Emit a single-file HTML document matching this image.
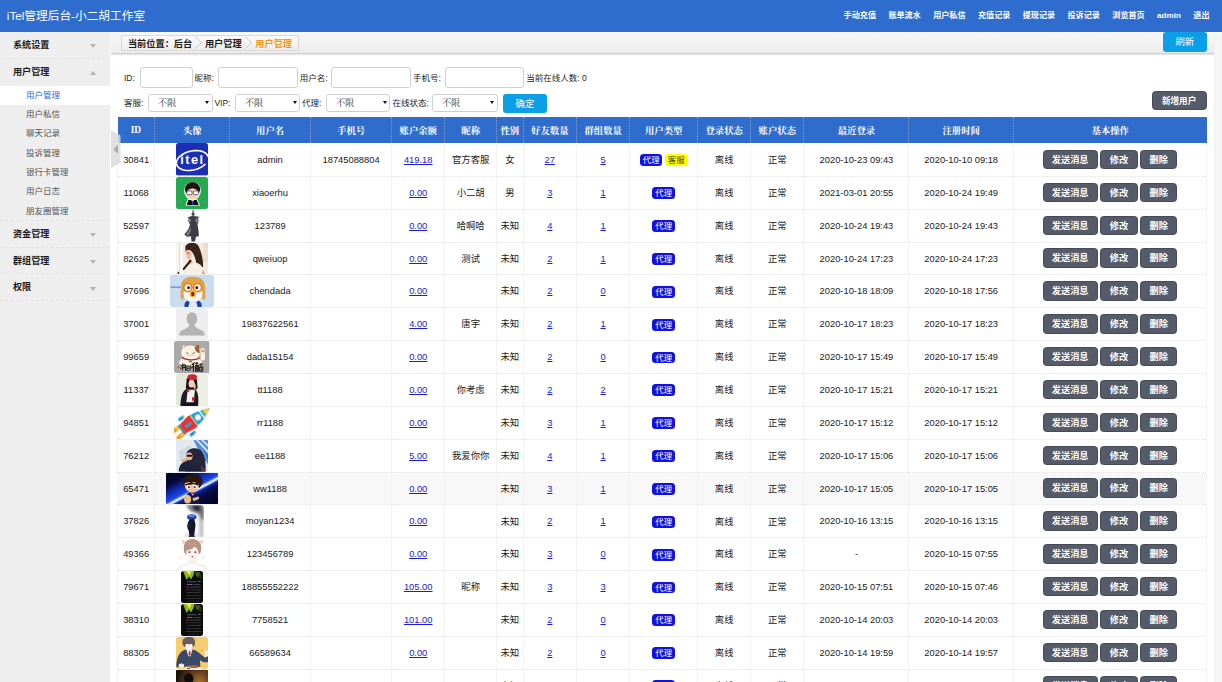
<!DOCTYPE html>
<html lang="zh-CN">
<head>
<meta charset="utf-8">
<title>iTel管理后台-小二胡工作室</title>
<style>
*{box-sizing:border-box;margin:0;padding:0}
html,body{width:1222px;height:682px;overflow:hidden;background:#fff}
body{font-family:"Liberation Sans","Noto Sans CJK SC",sans-serif;font-size:9.35px;color:#1a1a1a;position:relative}
#top{position:absolute;left:0;top:0;width:1222px;height:32px;background:#2e6dcd}
#top .title{position:absolute;left:6.8px;top:0;line-height:32px;color:#fff;font-size:11.7px;white-space:nowrap}
#top .nav{position:absolute;right:12.5px;top:0;line-height:32px;white-space:nowrap;color:#fff;font-weight:bold;font-size:8.1px}
#top .nav span{display:inline-block;margin-left:12.4px}
#side{position:absolute;left:0;top:32px;width:110.3px;height:650px;background:#eee}
#side .m{height:26.65px;line-height:27.6px;padding-left:13px;font-weight:bold;font-size:9.1px;color:#1a1a1a;border-bottom:1px dashed #e3e3e3;position:relative}
#side .m i{position:absolute;left:89.6px;top:12.4px;width:0;height:0;border:3.8px solid transparent;border-top:4.2px solid #b2b2b2}
#side .m i.up{top:8.9px;border-top:3.8px solid transparent;border-bottom:4.2px solid #b2b2b2}
#side ul{list-style:none;padding:0.25px 0 0;height:135.7px;border-bottom:1px dashed #e3e3e3}
#side li{height:19.4px;line-height:18.6px;padding-left:26px;font-size:8.5px;color:#555}
#side li.on{background:#fff;color:#1e6ee6}
#bar{position:absolute;left:110.5px;top:32px;width:1103px;height:21.5px;background:linear-gradient(#f8f8f8,#ececec);border-bottom:1px solid #cfcfcf;box-shadow:0 1px 1.5px rgba(0,0,0,.12)}
#crumb{position:absolute;left:10.4px;top:3.4px;height:15.2px;width:177.7px;border:1px solid #d9d9d9;background:linear-gradient(#fafafa,#eee);font-weight:bold;font-size:9.2px;line-height:13.4px;white-space:nowrap}
#crumb span{position:absolute;top:1.5px}
#refresh{position:absolute;left:1162.6px;top:32.3px;width:44.4px;height:19.7px;background:#0a9fe6;color:#fff;border-radius:3px;text-align:center;line-height:20.6px;font-size:9.4px}
#scroll{position:absolute;left:1213.5px;top:33px;width:8.5px;height:649px;background:linear-gradient(90deg,#f1f1f1,#f6f6f6 30%,#f2f2f2 50%,#f7f7f7 70%,#f2f2f2)}
.f{position:absolute;font-size:8.5px;line-height:10px;white-space:nowrap;color:#222}
.inp{position:absolute;height:20.4px;border:1px solid #d0d0d0;border-radius:3px;background:#fff}
.sel{position:absolute;height:18.8px;border:1px solid #d0d0d0;border-radius:3px;background:#fff;font-family:"Liberation Serif","Noto Serif CJK SC",serif;font-size:9.2px;line-height:17.4px;padding-left:8.6px;color:#333}
.sel:after{content:"";position:absolute;right:2.6px;top:6.6px;border:2.3px solid transparent;border-top:3.6px solid #111}
#ok{position:absolute;left:502.9px;top:93.8px;width:44px;height:19px;background:#0a9fe6;color:#fff;border-radius:3px;text-align:center;line-height:19px;font-size:9.4px}
#add{position:absolute;left:1151.6px;top:91px;width:55px;height:18.9px;background:#565b6a;border:1px solid #454a57;color:#fff;border-radius:3.5px;text-align:center;line-height:18.6px;font-size:8.6px;font-weight:bold}
#handle{position:absolute;left:111px;top:130px;width:9.5px;height:38.2px}
table{position:absolute;left:117.1px;top:117.4px;width:1089px;border-collapse:collapse;table-layout:fixed}
th{height:26.05px;background:#2e6dcd;color:#fff;font-family:"Liberation Serif","Noto Serif CJK SC",serif;font-weight:bold;font-size:9.35px;border-left:1px dotted #7aa0e0;text-align:center}
th:first-child{border-left:none}
th{border-bottom:none}
tbody tr:first-child td{border-top:none}
td{height:32.85px;border:1px dotted #e4e4e4;border-left:1px solid #f3f3f3;border-right:1px solid #f3f3f3;text-align:center;vertical-align:middle;padding:0 0 1.6px;white-space:nowrap;overflow:hidden}
tr.hov td{background:#f8f8f8}
td a{color:#1a1ae0;text-decoration:underline}
.l{position:relative;top:0.9px}
td.av{line-height:0;font-size:0;padding:0}
td.av svg,td.av .ph{display:inline-block;vertical-align:middle;height:32.4px;margin:-0.28px 0;border-radius:2.5px;position:relative;top:0px}
.ph{width:32px;background:#ccc}
.bd{display:inline-block;height:11.9px;line-height:12.9px;border-radius:3.5px;width:22.6px;font-size:8.4px;margin:0 1.25px;vertical-align:middle;position:relative;top:1.3px}
.b1{background:#1212e0;color:#fff}
.b2{background:#ffff00;color:#444410}
.btn{display:inline-block;height:19.5px;line-height:19.3px;background:#565b6a;border:1px solid #454a57;color:#fff;border-radius:3.5px;font-weight:bold;font-size:9.2px;margin:0 1.25px;vertical-align:middle;text-align:center;position:relative;top:0.5px}
.w1{width:55.3px}.w2{width:37.3px}
</style>
</head>
<body>
<svg width="0" height="0" style="position:absolute"><defs>
<filter id="b03" x="-10%" y="-10%" width="120%" height="120%"><feGaussianBlur stdDeviation="0.3"/></filter>
<filter id="b06" x="-10%" y="-10%" width="120%" height="120%"><feGaussianBlur stdDeviation="0.55"/></filter>
<filter id="b1" x="-10%" y="-10%" width="120%" height="120%"><feGaussianBlur stdDeviation="1.2"/></filter>
</defs></svg>
<div id="top">
 <div class="title">iTel管理后台-小二胡工作室</div>
 <div class="nav"><span>手动充值</span><span>账单流水</span><span>用户私信</span><span>充值记录</span><span>提现记录</span><span>投诉记录</span><span>浏览首页</span><span>admin</span><span>退出</span></div>
</div>
<div id="side">
 <div class="m">系统设置<i></i></div>
 <div class="m" style="border-bottom:none">用户管理<i class="up"></i></div>
 <ul>
  <li class="on">用户管理</li><li>用户私信</li><li>聊天记录</li><li>投诉管理</li><li>银行卡管理</li><li>用户日志</li><li>朋友圈管理</li>
 </ul>
 <div class="m">资金管理<i></i></div>
 <div class="m">群组管理<i></i></div>
 <div class="m">权限<i></i></div>
</div>
<div id="bar">
 <div id="crumb">
  <span style="left:6px">当前位置：后台</span>
  <svg style="position:absolute;left:72.3px;top:0" width="8" height="13.4" viewBox="0 0 8 13.4"><path d="M0.5 0 L7.5 6.7 L0.5 13.4" fill="none" stroke="#ccc" stroke-width="1"/></svg>
  <span style="left:83px">用户管理</span>
  <svg style="position:absolute;left:122.5px;top:0" width="8" height="13.4" viewBox="0 0 8 13.4"><path d="M0.5 0 L7.5 6.7 L0.5 13.4" fill="none" stroke="#ccc" stroke-width="1"/></svg>
  <span style="left:133.4px;color:#f0961e">用户管理</span>
 </div>
</div>
<div id="refresh">刷新</div>
<div id="scroll"></div>

<span class="f" style="left:124px;top:72.5px">ID:</span><div class="inp" style="left:139.5px;top:67.2px;width:53.2px"></div>
<span class="f" style="left:194.5px;top:72.5px">昵称:</span><div class="inp" style="left:218.3px;top:67.2px;width:79.4px"></div>
<span class="f" style="left:299.8px;top:72.5px">用户名:</span><div class="inp" style="left:331.4px;top:67.2px;width:79.2px"></div>
<span class="f" style="left:413px;top:72.5px">手机号:</span><div class="inp" style="left:444.6px;top:67.2px;width:79.2px"></div>
<span class="f" style="left:526.2px;top:72.5px">当前在线人数: 0</span>

<span class="f" style="left:124px;top:98px">客服:</span><div class="sel" style="left:148.3px;top:93.6px;width:64.3px">不限</div>
<span class="f" style="left:214.4px;top:98px">VIP:</span><div class="sel" style="left:235.3px;top:93.6px;width:64.8px">不限</div>
<span class="f" style="left:302px;top:98px">代理:</span><div class="sel" style="left:326.3px;top:93.6px;width:63.9px">不限</div>
<span class="f" style="left:392.6px;top:98px">在线状态:</span><div class="sel" style="left:432.3px;top:93.6px;width:65.3px">不限</div>
<div id="ok">确定</div>
<div id="add">新增用户</div>

<table>
<colgroup><col style="width:37.1px"><col style="width:74.9px"><col style="width:81px"><col style="width:81px"><col style="width:53.3px"><col style="width:51.6px"><col style="width:26.7px"><col style="width:53.3px"><col style="width:53.3px"><col style="width:67.9px"><col style="width:53px"><col style="width:53.3px"><col style="width:105px"><col style="width:104.5px"><col style="width:193.1px"></colgroup>
<thead><tr><th>ID</th><th>头像</th><th>用户名</th><th>手机号</th><th>账户余额</th><th>昵称</th><th>性别</th><th>好友数量</th><th>群组数量</th><th>用户类型</th><th>登录状态</th><th>账户状态</th><th>最近登录</th><th>注册时间</th><th>基本操作</th></tr></thead>
<tbody>
<tr><td><span class="l">30841</span></td><td class="av"><svg width="32.6" height="32.4" viewBox="0 0 32.6 32" preserveAspectRatio="none"><rect width="32.6" height="32" fill="#1b2eb4"/>
<g transform="translate(16.3 17.3) rotate(-13)"><path d="M16.14 -0.82 L15.65 -2.43 L14.68 -3.97 L13.27 -5.39 L11.46 -6.65 L9.29 -7.70 L6.85 -8.52 L4.19 -9.08 L1.41 -9.36 L-1.41 -9.36 L-4.19 -9.08 L-6.85 -8.52 L-9.29 -7.70 L-11.46 -6.65 L-13.27 -5.39 L-14.68 -3.97 L-15.65 -2.43 L-16.14 -0.82 L-16.14 0.82 L-15.65 2.43 L-14.68 3.97 L-13.27 5.39 L-11.46 6.65 L-9.29 7.70 L-6.85 8.52 L-4.19 9.08 L-1.41 9.36 L1.41 9.36 L4.19 9.08 L6.85 8.52 L9.29 7.70 L11.46 6.65" fill="none" stroke="#fff" stroke-width="1.6" stroke-linecap="round" stroke-linejoin="round"/></g>
<text x="16.4" y="21" font-family="Liberation Sans,sans-serif" font-weight="bold" font-size="12.7" fill="#fff" text-anchor="middle" letter-spacing="1.5">itel</text></svg></td><td><span class="l">admin</span></td><td><span class="l">18745088804</span></td><td><a class="l">419.18</a></td><td>官方客服</td><td>女</td><td><a class="l">27</a></td><td><a class="l">5</a></td><td><span class="bd b1">代理</span><span class="bd b2">客服</span></td><td>离线</td><td>正常</td><td><span class="l">2020-10-23 09:43</span></td><td><span class="l">2020-10-10 09:18</span></td><td class="op"><span class="btn w1">发送消息</span><span class="btn w2">修改</span><span class="btn w2">删除</span></td></tr>
<tr><td><span class="l">11068</span></td><td class="av"><svg width="32.6" height="32.4" viewBox="0 0 32.6 32" preserveAspectRatio="none"><rect width="32.6" height="32" fill="#27a952"/>
<ellipse cx="16.5" cy="13.6" rx="8.4" ry="9" fill="#fff"/>
<path d="M9.5 28.2 L11.5 22 L21.5 22 L24 28.2 Z" fill="#fff"/>
<ellipse cx="16.5" cy="12" rx="7.6" ry="7" fill="#1c1512"/>
<ellipse cx="16.5" cy="16.5" rx="6" ry="5.4" fill="#f3d3b6"/>
<path d="M9.5 13.5 C10 7 23 7 23.5 13.5 C20 12 18 10.5 16 10.8 C13 11 12 13 9.5 13.5Z" fill="#1c1512"/>
<rect x="10.8" y="13.8" width="5.2" height="3.7" rx="1" fill="#fff" stroke="#333" stroke-width="0.7"/>
<rect x="17.3" y="13.8" width="5.2" height="3.7" rx="1" fill="#fff" stroke="#333" stroke-width="0.7"/>
<path d="M10.8 27.6 L12.3 22.8 L20.8 22.8 L22.8 27.6 Z" fill="#15120f"/>
<path d="M15 22.8 L18.2 22.8 L16.6 24.5Z" fill="#fff"/>
<rect x="16" y="23.5" width="1.3" height="4" fill="#2a4fc0"/></svg></td><td><span class="l">xiaoerhu</span></td><td><span class="l"></span></td><td><a class="l">0.00</a></td><td>小二胡</td><td>男</td><td><a class="l">3</a></td><td><a class="l">1</a></td><td><span class="bd b1">代理</span></td><td>离线</td><td>正常</td><td><span class="l">2021-03-01 20:55</span></td><td><span class="l">2020-10-24 19:49</span></td><td class="op"><span class="btn w1">发送消息</span><span class="btn w2">修改</span><span class="btn w2">删除</span></td></tr>
<tr><td><span class="l">52597</span></td><td class="av"><svg width="16.4" height="32.4" viewBox="0 0 16.4 32" preserveAspectRatio="none"><rect width="16.4" height="32" fill="#fff"/>
<g filter="url(#b03)">
<rect x="8.6" y="0" width="1" height="5" fill="#3a3a3a"/>
<ellipse cx="9.1" cy="5.2" rx="1.5" ry="1.8" fill="#4a4440"/>
<path d="M3.8 8 L15.6 7.4 L14.8 8.6 L4 9Z" fill="#5a5048"/>
<path d="M5 8 C7 6.5 11 6.5 13.5 8 C15 11 14.8 13 13.5 15 C14 19 15 23 14.8 27 L12 27.5 L11 32 L7.5 32 L7 27 L3 27.5 L0.3 25 C3 22 5.5 19 6 15 C4 13 3.8 10.5 5 8Z" fill="#3d3e44"/>
<path d="M4.6 9.5 C6 9 7 10 6.8 12.5 C6 14 4.6 13 4.6 9.5Z" fill="#8793a6"/>
<path d="M11.5 9.5 C13.5 9 14.5 11 13.6 13.5 C12 14 11.2 12 11.5 9.5Z" fill="#7d8899"/>
<path d="M2 24.5 C4 22 5.5 20 6.3 17.5 L7 22 L4 27Z" fill="#6e7684"/>
</g></svg></td><td><span class="l">123789</span></td><td><span class="l"></span></td><td><a class="l">0.00</a></td><td>哈啊哈</td><td>未知</td><td><a class="l">4</a></td><td><a class="l">1</a></td><td><span class="bd b1">代理</span></td><td>离线</td><td>正常</td><td><span class="l">2020-10-24 19:43</span></td><td><span class="l">2020-10-24 19:43</span></td><td class="op"><span class="btn w1">发送消息</span><span class="btn w2">修改</span><span class="btn w2">删除</span></td></tr>
<tr><td><span class="l">82625</span></td><td class="av"><svg width="32.4" height="32.4" viewBox="0 0 32.4 32" preserveAspectRatio="none"><rect width="32.4" height="32" fill="#f3ebe1"/>
<rect x="0" y="0" width="7" height="32" fill="#f9f6f1"/>
<rect x="3" y="0" width="1" height="32" fill="#e4dcd2"/>
<rect x="27" y="0" width="5.4" height="20" fill="#f1dccb"/>
<g filter="url(#b06)">
<path d="M9.3 5 C10 0 20 -1 22.5 4 C25.5 10 27.5 18 27 25 L20.5 23 C20 17 18 11 14.5 8.5 C12.5 7.5 10.5 8 9.6 10.5 Z" fill="#3a2217"/>
<path d="M9.8 8.5 C12 7 15 8.5 15.6 12 C16 15 14 17.5 12 17 C10.5 15.5 9.5 12 9.8 8.5Z" fill="#efbea6"/>
<path d="M11 10.8 L13.4 11.2" stroke="#7a3a2a" stroke-width="0.8"/>
<path d="M12 17 C14 17 16 19 17 21 L12 23Z" fill="#f0c6b0"/>
<path d="M9 32 C10 26 13 22 20 20.5 C24 21 27 24 28.5 32Z" fill="#f6f0e6"/>
<path d="M14.5 18.5 L7.8 26.5" stroke="#2b1a15" stroke-width="2.1" stroke-linecap="round"/>
<path d="M27 27 L29 32 L26 32Z" fill="#d89a7c"/>
<rect x="1.5" y="29.5" width="1.6" height="2.5" fill="#444"/>
</g></svg></td><td><span class="l">qweiuop</span></td><td><span class="l"></span></td><td><a class="l">0.00</a></td><td>测试</td><td>未知</td><td><a class="l">2</a></td><td><a class="l">1</a></td><td><span class="bd b1">代理</span></td><td>离线</td><td>正常</td><td><span class="l">2020-10-24 17:23</span></td><td><span class="l">2020-10-24 17:23</span></td><td class="op"><span class="btn w1">发送消息</span><span class="btn w2">修改</span><span class="btn w2">删除</span></td></tr>
<tr><td><span class="l">97696</span></td><td class="av"><svg width="44.3" height="32.4" viewBox="0 0 44.3 32" preserveAspectRatio="none"><rect width="44.3" height="32" fill="#c9dcf0"/>
<rect x="0.5" y="11.4" width="11" height="1.2" fill="#5d8cc4"/>
<g filter="url(#b03)">
<path d="M10.8 14 C10 4 17 1.5 23 1.8 C30 1.5 36 5 35.2 14 L35.5 22 C35 25 33 25.5 32.5 23 L31 15 L15 15 L13.5 23 C13 25.5 11 25 10.6 22Z" fill="#dfa348"/>
<ellipse cx="23" cy="18.2" rx="9.6" ry="8.2" fill="#f6f6f8"/>
<path d="M14.5 25 C17 28 29 28 31.5 25 L31 30 C28 32 18 32 15 30Z" fill="#e8eaf0"/>
<path d="M14.6 32 C14 28 15.5 26 17.5 25.5 L19.6 27 L18.2 32Z" fill="#1d3fa2"/>
<path d="M31.6 32 C32 28 30.5 26 28.6 25.5 L26.4 27 L27.8 32Z" fill="#1d3fa2"/>
<circle cx="17.8" cy="12.4" r="4" fill="#fff" stroke="#f07a1c" stroke-width="1.7"/>
<circle cx="27.6" cy="12.4" r="4" fill="#fff" stroke="#f07a1c" stroke-width="1.7"/>
<rect x="21.5" y="11.3" width="2.6" height="1.6" fill="#f07a1c"/>
<circle cx="18.6" cy="12.6" r="1.4" fill="#111"/>
<circle cx="26.8" cy="12.6" r="1.4" fill="#111"/>
<ellipse cx="22.8" cy="18.3" rx="3.4" ry="3.8" fill="#f3bf1e"/>
<ellipse cx="22.8" cy="18.8" rx="1.7" ry="2.3" fill="#8b1e14"/>
<circle cx="30.5" cy="6" r="0.8" fill="#7fc04a"/>
</g></svg></td><td><span class="l">chendada</span></td><td><span class="l"></span></td><td><a class="l">0.00</a></td><td></td><td>未知</td><td><a class="l">2</a></td><td><a class="l">0</a></td><td><span class="bd b1">代理</span></td><td>离线</td><td>正常</td><td><span class="l">2020-10-18 18:09</span></td><td><span class="l">2020-10-18 17:56</span></td><td class="op"><span class="btn w1">发送消息</span><span class="btn w2">修改</span><span class="btn w2">删除</span></td></tr>
<tr><td><span class="l">37001</span></td><td class="av"><svg width="32.2" height="32.4" viewBox="0 0 32.2 32" preserveAspectRatio="none"><rect width="32.2" height="32" fill="#eeeeee"/>
<ellipse cx="15.9" cy="10.6" rx="5.4" ry="6.3" fill="#b3b3b3"/>
<path d="M3.2 27.2 C3.2 23.5 4.5 22.5 8 21.2 C11 20 12.8 19 13 16.5 L18.8 16.5 C19 19 20.8 20 23.8 21.2 C27.3 22.5 28.8 23.5 28.8 27.2 Z" fill="#b3b3b3"/></svg></td><td><span class="l">19837622561</span></td><td><span class="l"></span></td><td><a class="l">4.00</a></td><td>唐宇</td><td>未知</td><td><a class="l">2</a></td><td><a class="l">1</a></td><td><span class="bd b1">代理</span></td><td>离线</td><td>正常</td><td><span class="l">2020-10-17 18:23</span></td><td><span class="l">2020-10-17 18:23</span></td><td class="op"><span class="btn w1">发送消息</span><span class="btn w2">修改</span><span class="btn w2">删除</span></td></tr>
<tr><td><span class="l">99659</span></td><td class="av"><svg width="35.3" height="32.4" viewBox="0 0 35.3 32" preserveAspectRatio="none"><rect width="35.3" height="32" fill="#a9a9a9"/>
<g filter="url(#b03)">
<path d="M8.5 10 L9.2 3.6 L14 6.8Z" fill="#fbf3e4"/>
<path d="M9.6 8.6 L10 5.2 L12.6 7Z" fill="#d8322c"/>
<path d="M20 6.5 L24.5 3.8 L25.2 10Z" fill="#8c4a22"/>
<path d="M21.6 7.2 L24 5.6 L24.2 8.8Z" fill="#d8322c"/>
<ellipse cx="16.6" cy="11.6" rx="9.4" ry="7.2" fill="#fbf3e4"/>
<path d="M20.5 5.8 C24 6.5 26 9 25.6 12 C23.5 12 21 10 20.5 5.8Z" fill="#9a5a2a"/>
<path d="M26.5 8.5 C27.5 6.2 30.5 6.4 30.8 9 L31 17.5 C30.5 20 27 20 26.6 17.5Z" fill="#fbf3e4"/>
<circle cx="28.8" cy="9.8" r="1.5" fill="#c8a070"/>
<path d="M5 22.5 C5.5 17 10 15.5 16.5 15.8 C23.5 15.6 28 17.5 28.5 22.5 C25 25 8 25 5 22.5Z" fill="#fbf3e4"/>
<path d="M8 16 C12 19.2 21 19.6 25.6 16.8" fill="none" stroke="#c3221f" stroke-width="1.3"/>
<circle cx="16.5" cy="20" r="1.5" fill="#b07a3a"/>
<path d="M12 11.6 L14.5 12.2 M18.5 12.2 L21 11.6" stroke="#5a3a2a" stroke-width="0.7"/>
<path d="M13 14 L20 14" stroke="#f2b8a8" stroke-width="1"/>
<g fill="none" stroke="#2b211b" stroke-linecap="round" stroke-linejoin="round">
<path d="M7 24.4 L10.6 23.6 M8.8 22.6 L8.6 28.6 M6.8 27 L11 25.8 M11.4 23.4 L11.6 28.8" stroke-width="1.1"/>
<path d="M13 25 L16.4 24.6 L16 29 L13.2 29 Z M13 27 L16.2 26.8" stroke-width="0.9"/>
<path d="M18 23.6 C19 22 20 21.6 20.4 21.4 M19.6 22.4 L19.4 30 M17.6 26.6 L19.4 25 M21.6 22.4 L24 22 M22.8 21 L22.8 24 M21.4 24.6 L24.4 24.4 L24.2 29.8 L21.6 29.8 Z M21.6 27 L24.2 27 M23 24.6 L23 29.8" stroke-width="1.15"/>
<path d="M25.4 23.4 L28.6 22.8 M27 22 L27 25 M25.4 26 L28.8 25.6 L28.6 30 L25.6 30 Z M27.2 26 L27.2 30" stroke-width="1"/>
</g>
<circle cx="4.4" cy="26" r="1.1" fill="#d8423a"/>
</g></svg></td><td><span class="l">dada15154</span></td><td><span class="l"></span></td><td><a class="l">0.00</a></td><td></td><td>未知</td><td><a class="l">2</a></td><td><a class="l">0</a></td><td><span class="bd b1">代理</span></td><td>离线</td><td>正常</td><td><span class="l">2020-10-17 15:49</span></td><td><span class="l">2020-10-17 15:49</span></td><td class="op"><span class="btn w1">发送消息</span><span class="btn w2">修改</span><span class="btn w2">删除</span></td></tr>
<tr><td><span class="l">11337</span></td><td class="av"><svg width="32.4" height="32.4" viewBox="0 0 32.4 32" preserveAspectRatio="none"><rect width="32.4" height="32" fill="#e2e8dc"/>
<rect x="22" y="0" width="10.4" height="32" fill="#ecefe4"/>
<g filter="url(#b06)">
<path d="M10.6 6 C10 2 21 2 21 6.5 L21.6 14 L18.5 16 L12.5 16 L9.8 14Z" fill="#1b1519"/>
<ellipse cx="16.2" cy="3.2" rx="4.8" ry="3" fill="#d1202f"/>
<ellipse cx="15.6" cy="9.6" rx="3" ry="3.8" fill="#f0d2c4"/>
<path d="M18 9 C20 10 20.4 13 19 15.5 L17.4 13Z" fill="#e8c0ae"/>
<path d="M4.4 32 C4.4 24 6 17 10.5 14.5 L12.5 16 L10 32Z" fill="#1b1a2b"/>
<path d="M19 15 C22 17 23 24 22 32 L17 32 L18 22Z" fill="#1b1a2b"/>
<path d="M10 32 L11.6 15.6 L18.5 15.6 L18.2 24 L17 32Z" fill="#f1f1ea"/>
<rect x="10.6" y="15.8" width="2.6" height="2" fill="#d1202f"/>
<rect x="16" y="23" width="2.6" height="3.4" fill="#d1202f"/>
<path d="M7 28 L20 28 L21 32 L6 32Z" fill="#17131c"/>
</g></svg></td><td><span class="l">tt1188</span></td><td><span class="l"></span></td><td><a class="l">0.00</a></td><td>你考虑</td><td>未知</td><td><a class="l">2</a></td><td><a class="l">2</a></td><td><span class="bd b1">代理</span></td><td>离线</td><td>正常</td><td><span class="l">2020-10-17 15:21</span></td><td><span class="l">2020-10-17 15:21</span></td><td class="op"><span class="btn w1">发送消息</span><span class="btn w2">修改</span><span class="btn w2">删除</span></td></tr>
<tr><td><span class="l">94851</span></td><td class="av"><svg width="35.4" height="32.4" viewBox="0 0 35.4 32" preserveAspectRatio="none"><rect width="35.4" height="32" fill="#fff"/>
<g transform="translate(9.2 21.6) rotate(-37.5)" filter="url(#b03)">
<ellipse cx="-6.2" cy="-3.9" rx="5.2" ry="2.1" fill="#f59b22"/>
<ellipse cx="-6.2" cy="3.9" rx="5.2" ry="2.1" fill="#f59b22"/>
<ellipse cx="-4.2" cy="-3.9" rx="2.4" ry="1" fill="#f7d33a"/>
<ellipse cx="-4.2" cy="3.9" rx="2.4" ry="1" fill="#f7d33a"/>
<rect x="-2.6" y="-5.6" width="3.2" height="11.2" rx="1" fill="#6d7482"/>
<path d="M0 -5 C8 -7.6 22 -7 32.5 0 C22 7 8 7.6 0 5 Z" fill="#1a9fe2"/>
<path d="M0 -5 C4 -6.3 9 -6.9 13.5 -6.9 L13.5 6.9 C9 6.9 4 6.3 0 5 Z" fill="#e13535"/>
<path d="M13.6 -7 L13.6 7" stroke="#f2e35a" stroke-width="0.9"/>
<path d="M23.6 -5.3 L23.6 5.3" stroke="#fff" stroke-width="1.3"/>
<path d="M26.5 -4 L32.5 0 L26.5 4 Z" fill="#f4d326"/>
<path d="M31.5 -0.6 L35 0 L31.5 0.6Z" fill="#c9702a"/>
<circle cx="18.6" cy="0" r="2.7" fill="#fff" stroke="#f2dcb0" stroke-width="0.8"/>
<ellipse cx="6.5" cy="0" rx="3.6" ry="1.5" fill="#1a9fe2"/>
<rect x="0.5" y="-11.2" width="7.5" height="3.2" rx="1.6" fill="#1a9fe2"/>
<rect x="-0.8" y="-11.2" width="2.4" height="3.2" rx="1" fill="#e9edf2"/>
<rect x="7" y="-11" width="1.6" height="2.8" rx="0.8" fill="#e2b23a"/>
<rect x="0.5" y="8" width="7.5" height="3.2" rx="1.6" fill="#1a9fe2"/>
<rect x="-0.8" y="8" width="2.4" height="3.2" rx="1" fill="#e9edf2"/>
<rect x="7" y="8.2" width="1.6" height="2.8" rx="0.8" fill="#e2b23a"/>
</g></svg></td><td><span class="l">rr1188</span></td><td><span class="l"></span></td><td><a class="l">0.00</a></td><td></td><td>未知</td><td><a class="l">3</a></td><td><a class="l">1</a></td><td><span class="bd b1">代理</span></td><td>离线</td><td>正常</td><td><span class="l">2020-10-17 15:12</span></td><td><span class="l">2020-10-17 15:12</span></td><td class="op"><span class="btn w1">发送消息</span><span class="btn w2">修改</span><span class="btn w2">删除</span></td></tr>
<tr><td><span class="l">76212</span></td><td class="av"><svg width="32.7" height="32.4" viewBox="0 0 32.7 32" preserveAspectRatio="none"><rect width="32.7" height="32" fill="#e3e9f1"/>
<g filter="url(#b06)">
<path d="M17 0 L32.7 0 L32.7 26 L24 14Z" fill="#5b8fd9"/>
<path d="M19 0 L21 0 L32.7 12 L32.7 15Z M24 0 L26 0 L32.7 6 L32.7 8.5Z" fill="#dfe9f7"/>
<path d="M27 8 L32.7 18 L32.7 22Z" fill="#2f5fb8"/>
<path d="M3 12 L14 6 L16 14 L4 22Z" fill="#cfd9e6"/>
<path d="M10.6 14 C12 8.5 22 7.5 25.6 12 C29.5 17 30 25 29.6 32 L9 32 C10.5 27 10 21 10.6 14Z" fill="#25283a"/>
<ellipse cx="13.2" cy="17.2" rx="3.3" ry="3.8" fill="#e7b69c"/>
<rect x="10.6" y="15.6" width="5.6" height="1.9" rx="0.9" fill="#16161e"/>
<path d="M5 21 L10.5 18.5 L11.5 21 L7 25Z" fill="#e3ae92"/>
<path d="M2.6 32 C3 26 6 23 10 22 L20 26 L28 32Z" fill="#1d2137"/>
<path d="M25 26 L29.6 31 L29.6 32 L25.5 32Z" fill="#5a4034"/>
</g></svg></td><td><span class="l">ee1188</span></td><td><span class="l"></span></td><td><a class="l">5.00</a></td><td>我爱你你</td><td>未知</td><td><a class="l">4</a></td><td><a class="l">1</a></td><td><span class="bd b1">代理</span></td><td>离线</td><td>正常</td><td><span class="l">2020-10-17 15:06</span></td><td><span class="l">2020-10-17 15:06</span></td><td class="op"><span class="btn w1">发送消息</span><span class="btn w2">修改</span><span class="btn w2">删除</span></td></tr>
<tr class="hov"><td><span class="l">65471</span></td><td class="av"><svg width="52" height="32.4" viewBox="0 0 52 32" preserveAspectRatio="none"><defs><linearGradient id="cg" gradientUnits="userSpaceOnUse" x1="-10.43" y1="5.28" x2="14.35" y2="52.13"><stop offset="0.000" stop-color="#03031a"/><stop offset="0.245" stop-color="#05093a"/><stop offset="0.330" stop-color="#0c1f8a"/><stop offset="0.415" stop-color="#1233c0"/><stop offset="0.491" stop-color="#1942dc"/><stop offset="0.525" stop-color="#2c5ef0"/><stop offset="0.547" stop-color="#a8c4ff"/><stop offset="0.566" stop-color="#ffffff"/><stop offset="0.585" stop-color="#9ab4f8"/><stop offset="0.608" stop-color="#1a34b0"/><stop offset="0.651" stop-color="#0a1470"/><stop offset="0.736" stop-color="#060b3c"/><stop offset="1.000" stop-color="#03031a"/></linearGradient></defs>
<rect width="52" height="32" fill="url(#cg)"/>
<g filter="url(#b03)">
<path d="M12.3 6.2 L18.4 7.6 C19 3.4 24 2 28 2.6 C33 2 37.4 6 36.6 11 L33.4 16 L32 11 L20 11.4 L19 15.6 C17 13.4 16.4 10.4 17.2 8.8Z" fill="#2a180b"/>
<path d="M18.6 11.5 C20.5 9.5 31 9.5 32.6 11.5 C33.2 16 30.2 20 26 20.4 C21.6 20 18.2 16 18.6 11.5Z" fill="#f2c391"/>
<path d="M18.4 12.4 L24 10.6 L23 8 L28 11.2 L33.4 9 L32.4 13.4 L27 11.8 L21 13.6Z" fill="#2a180b"/>
<ellipse cx="22.6" cy="14.8" rx="1.9" ry="2.1" fill="#fff"/><ellipse cx="29.2" cy="14.8" rx="1.9" ry="2.1" fill="#fff"/>
<circle cx="23" cy="15" r="1.1" fill="#2c4a9a"/><circle cx="28.8" cy="15" r="1.1" fill="#2c4a9a"/>
<path d="M18.8 32 C18.8 25 20.5 21 24 20 L29 20 C32.5 21.4 33.6 26 33.2 32Z" fill="#111a4c"/>
<path d="M24.6 20.2 L28.8 20.2 L26.8 23.4Z" fill="#fff"/>
<rect x="25.4" y="20.4" width="2.8" height="1.6" fill="#d3241f"/>
<ellipse cx="21.6" cy="26.8" rx="3.5" ry="4.2" fill="#eebc88"/>
<path d="M20.4 23 L22.4 22.6 L23 26 L21 26.4Z" fill="#eebc88"/>
<path d="M26.4 26 L32.6 24.2 L33.2 26.4 L27.6 28.8Z" fill="#eebc88"/>
</g></svg></td><td><span class="l">ww1188</span></td><td><span class="l"></span></td><td><a class="l">0.00</a></td><td></td><td>未知</td><td><a class="l">3</a></td><td><a class="l">1</a></td><td><span class="bd b1">代理</span></td><td>离线</td><td>正常</td><td><span class="l">2020-10-17 15:05</span></td><td><span class="l">2020-10-17 15:05</span></td><td class="op"><span class="btn w1">发送消息</span><span class="btn w2">修改</span><span class="btn w2">删除</span></td></tr>
<tr><td><span class="l">37826</span></td><td class="av"><svg width="23.6" height="32.4" viewBox="0 0 23.6 32" preserveAspectRatio="none"><rect width="23.6" height="32" fill="#fdfdfd"/>
<g filter="url(#b1)">
<path d="M17 8 L23.6 6 L23.6 32 L18 32 C19.5 26 19.5 14 17 8Z" fill="#c4c5c9"/>
<path d="M6 0 L23.6 0 L23.6 10 C20 11 17.5 8 14.5 7.4 C11 7 8 4 6 0Z" fill="#7c7e84"/>
<path d="M11.5 0 L20.5 0 L20 6.4 L14.5 5.4Z" fill="#2a2b31"/>
<path d="M19.5 3 L23.6 3 L23.6 15 L21 14Z" fill="#6a6b70"/>
<path d="M0 0 L5 0 L6 32 L0 32Z" fill="#fff"/>
<path d="M4 28 L20 28 L20 32 L4 32Z" fill="#e4e4e6"/>
</g>
<g filter="url(#b03)">
<ellipse cx="11.8" cy="11.9" rx="4.7" ry="2.8" fill="#1b3b9c"/>
<ellipse cx="11.6" cy="10.9" rx="3.3" ry="1.3" fill="#5a86e0"/>
<path d="M9.6 14.4 C10.4 13.6 13.4 13.6 14.2 14.4 C15.6 17 15.8 21 15 24.4 L14 31 L9.6 31 L8.6 25 C6.6 22.5 7 18 9.6 14.4Z" fill="#12172c"/>
<path d="M7.6 20 L9.4 17.4 L10 21.4 L8.2 23Z" fill="#1d2850"/>
<rect x="8.8" y="30.2" width="6" height="1.4" fill="#30323c"/>
</g></svg></td><td><span class="l">moyan1234</span></td><td><span class="l"></span></td><td><a class="l">0.00</a></td><td></td><td>未知</td><td><a class="l">2</a></td><td><a class="l">1</a></td><td><span class="bd b1">代理</span></td><td>离线</td><td>正常</td><td><span class="l">2020-10-16 13:15</span></td><td><span class="l">2020-10-16 13:15</span></td><td class="op"><span class="btn w1">发送消息</span><span class="btn w2">修改</span><span class="btn w2">删除</span></td></tr>
<tr><td><span class="l">49366</span></td><td class="av"><svg width="31" height="32.4" viewBox="0 0 31 32" preserveAspectRatio="none"><rect width="31" height="32" fill="#fff"/>
<g filter="url(#b03)">
<path d="M4.4 1 L9 3.6 L6 6.4Z" fill="#f0cdb8"/><path d="M26.4 1 L22 3.6 L25 6.4Z" fill="#f0cdb8"/>
<path d="M0.6 32 C1 28.5 3.5 27.6 10.6 26 L12.2 23 L18.8 23 L20.4 26 C27.5 27.6 30 28.5 30.4 32" fill="#fdfdfd" stroke="#d6d6da" stroke-width="0.7"/>
<path d="M11.6 17 L19.4 17 L18.8 24.4 C17 26 14 26 12.2 24.4Z" fill="#fbeee8"/>
<ellipse cx="15.4" cy="14" rx="5.4" ry="6.6" fill="#fcf1ec"/>
<path d="M7 12 C5.6 4 11 0.8 15.4 1 C20 0.8 25.4 4 24 12 C23.6 15 22.4 16 21.6 16.6 C21.6 12 20 9.6 17.6 8.6 C16 10.5 12 12 9.6 12 C9.6 14 9.4 15.5 9.2 16.6 C8 16 7.2 14.5 7 12Z" fill="#b99384"/>
<path d="M12 4 L14 9 M18 3 L17 8" stroke="#d8a8a0" stroke-width="0.6"/>
<ellipse cx="12.4" cy="14" rx="1.1" ry="0.8" fill="#7a3a2a"/><ellipse cx="18.4" cy="14" rx="1.1" ry="0.8" fill="#7a3a2a"/>
<ellipse cx="15.4" cy="18.4" rx="1" ry="0.7" fill="#d8483a"/>
<path d="M3.4 17.4 L4 19 L5.6 19.6 L4 20.2 L3.4 21.8 L2.8 20.2 L1.2 19.6 L2.8 19Z" fill="#f7efc0"/>
<path d="M26.4 17 L27 18.6 L28.6 19.2 L27 19.8 L26.4 21.4 L25.8 19.8 L24.2 19.2 L25.8 18.6Z" fill="#f7efc0"/>
</g></svg></td><td><span class="l">123456789</span></td><td><span class="l"></span></td><td><a class="l">0.00</a></td><td></td><td>未知</td><td><a class="l">3</a></td><td><a class="l">0</a></td><td><span class="bd b1">代理</span></td><td>离线</td><td>正常</td><td><span class="l">-</span></td><td><span class="l">2020-10-15 07:55</span></td><td class="op"><span class="btn w1">发送消息</span><span class="btn w2">修改</span><span class="btn w2">删除</span></td></tr>
<tr><td><span class="l">79671</span></td><td class="av"><svg width="22" height="32.4" viewBox="0 0 22 32" preserveAspectRatio="none"><rect width="22" height="32" fill="#0b0b0b"/>
<g filter="url(#b03)">
<path d="M2 0 L13.5 0 L12.5 4 L10 8.5 L8 5.5 L5.5 9 L4 5Z" fill="#8fb81a"/>
<path d="M5 0 L10.5 0 L8.6 4.6 L7 2.6Z" fill="#e2ea4e"/>
<path d="M14 0.6 L19.6 1.4 L18 6.4 L15 5Z" fill="#3f5a16"/>
<path d="M18.6 2.5 L21 3.4 L20.4 8 L18.6 7Z" fill="#22320e"/>
<rect x="6" y="10.2" width="9.6" height="0.9" fill="#5c5470"/><rect x="17" y="9.8" width="2.6" height="0.9" fill="#777"/>
<rect x="6" y="12.8" width="5.4" height="1" fill="#7a62a0"/><rect x="12.4" y="12.8" width="7" height="0.9" fill="#4a4a52"/>
<rect x="5.4" y="15.4" width="2" height="1" fill="#b03a5a"/><rect x="8.4" y="15.4" width="11.2" height="0.9" fill="#4b4858"/>
<rect x="4.6" y="18.2" width="15.4" height="0.8" fill="#3a3a3a"/>
<rect x="6" y="21" width="11.4" height="0.8" fill="#444"/><rect x="17.6" y="20.2" width="2" height="1.4" fill="#3a3a3a"/>
<rect x="5" y="24" width="15" height="0.8" fill="#363636"/>
<rect x="4.6" y="26.8" width="15.6" height="0.8" fill="#3c3c3c"/>
<rect x="6" y="29.4" width="12" height="0.7" fill="#2c2c2c"/>
</g></svg></td><td><span class="l">18855552222</span></td><td><span class="l"></span></td><td><a class="l">105.00</a></td><td>昵称</td><td>未知</td><td><a class="l">3</a></td><td><a class="l">3</a></td><td><span class="bd b1">代理</span></td><td>离线</td><td>正常</td><td><span class="l">2020-10-15 07:51</span></td><td><span class="l">2020-10-15 07:46</span></td><td class="op"><span class="btn w1">发送消息</span><span class="btn w2">修改</span><span class="btn w2">删除</span></td></tr>
<tr><td><span class="l">38310</span></td><td class="av"><svg width="22" height="32.4" viewBox="0 0 22 32" preserveAspectRatio="none"><rect width="22" height="32" fill="#0b0b0b"/>
<g filter="url(#b03)">
<path d="M2 0 L13.5 0 L12.5 4 L10 8.5 L8 5.5 L5.5 9 L4 5Z" fill="#8fb81a"/>
<path d="M5 0 L10.5 0 L8.6 4.6 L7 2.6Z" fill="#e2ea4e"/>
<path d="M14 0.6 L19.6 1.4 L18 6.4 L15 5Z" fill="#3f5a16"/>
<path d="M18.6 2.5 L21 3.4 L20.4 8 L18.6 7Z" fill="#22320e"/>
<rect x="6" y="10.2" width="9.6" height="0.9" fill="#5c5470"/><rect x="17" y="9.8" width="2.6" height="0.9" fill="#777"/>
<rect x="6" y="12.8" width="5.4" height="1" fill="#7a62a0"/><rect x="12.4" y="12.8" width="7" height="0.9" fill="#4a4a52"/>
<rect x="5.4" y="15.4" width="2" height="1" fill="#b03a5a"/><rect x="8.4" y="15.4" width="11.2" height="0.9" fill="#4b4858"/>
<rect x="4.6" y="18.2" width="15.4" height="0.8" fill="#3a3a3a"/>
<rect x="6" y="21" width="11.4" height="0.8" fill="#444"/><rect x="17.6" y="20.2" width="2" height="1.4" fill="#3a3a3a"/>
<rect x="5" y="24" width="15" height="0.8" fill="#363636"/>
<rect x="4.6" y="26.8" width="15.6" height="0.8" fill="#3c3c3c"/>
<rect x="6" y="29.4" width="12" height="0.7" fill="#2c2c2c"/>
</g></svg></td><td><span class="l">7758521</span></td><td><span class="l"></span></td><td><a class="l">101.00</a></td><td></td><td>未知</td><td><a class="l">2</a></td><td><a class="l">0</a></td><td><span class="bd b1">代理</span></td><td>离线</td><td>正常</td><td><span class="l">2020-10-14 20:03</span></td><td><span class="l">2020-10-14 20:03</span></td><td class="op"><span class="btn w1">发送消息</span><span class="btn w2">修改</span><span class="btn w2">删除</span></td></tr>
<tr><td><span class="l">88305</span></td><td class="av"><svg width="32.4" height="32.4" viewBox="0 0 32.4 32" preserveAspectRatio="none"><rect width="32.4" height="32" fill="#f6cd6c"/>
<g filter="url(#b03)">
<path d="M0.4 30 C0 23 2.6 14.5 9 12.6 L17.4 12.6 C22 13.6 25 18 29.4 20.4 L31.4 17 L32.4 18 L32.4 24.6 C29 25.6 26 24.6 24 23 L24.4 29.6 L14 29 L8 29.6Z" fill="#3b4a68"/>
<path d="M10.4 12.6 L16.4 12.6 L14.6 19 L12.4 19Z" fill="#f4f2f0"/>
<path d="M13 13 L14.2 13 L14.6 17.6 L13.5 18.8 L12.6 17.6Z" fill="#c3282a"/>
<path d="M6.4 6.5 C5.6 1.5 10 -0.6 13 0 C17 -0.6 20 2 19 7.4 L17.6 9.6 L8 9.6Z" fill="#6b5b5a"/>
<path d="M9.4 7.6 C9.6 6.4 16.4 6.4 16.6 7.6 C16.8 11 15.4 13.6 13 13.8 C10.6 13.6 9.2 11 9.4 7.6Z" fill="#f6f2f0"/>
<path d="M9 8 L11 6 L13 7.6 L15 6 L17.4 8.4 L17.4 6 L9 6Z" fill="#6b5b5a"/>
<path d="M28.4 14 C29.4 12.4 31.4 12.6 31.8 14.4 L32 19 L29.4 20 Z" fill="#f4f0ee"/>
<rect x="24.6" y="12.8" width="2.4" height="1.5" fill="#e8b830"/>
<ellipse cx="5.4" cy="28.4" rx="2.8" ry="2.2" fill="#f4f0ee"/>
<ellipse cx="17.4" cy="30.6" rx="8.4" ry="1.5" fill="#fbfbfb"/>
<ellipse cx="18" cy="29.2" rx="5" ry="1.6" fill="#b4622a"/>
<rect x="11" y="30.4" width="3" height="1.2" fill="#c02828"/>
</g></svg></td><td><span class="l">66589634</span></td><td><span class="l"></span></td><td><a class="l">0.00</a></td><td></td><td>未知</td><td><a class="l">2</a></td><td><a class="l">0</a></td><td><span class="bd b1">代理</span></td><td>离线</td><td>正常</td><td><span class="l">2020-10-14 19:59</span></td><td><span class="l">2020-10-14 19:57</span></td><td class="op"><span class="btn w1">发送消息</span><span class="btn w2">修改</span><span class="btn w2">删除</span></td></tr>
<tr><td><span class="l">63920</span></td><td class="av"><svg width="32.4" height="32.4" viewBox="0 0 32.4 32" preserveAspectRatio="none"><defs><radialGradient id="dg" cx="0.72" cy="0.4" r="0.7"><stop offset="0" stop-color="#a8722e"/><stop offset="0.45" stop-color="#6a401c"/><stop offset="1" stop-color="#1b120c"/></radialGradient></defs>
<rect width="32.4" height="32" fill="url(#dg)"/>
<rect width="32.4" height="1.2" fill="#120c08"/>
<g filter="url(#b06)"><ellipse cx="12.8" cy="9.6" rx="4.6" ry="5.4" fill="#0d0907"/><path d="M6 32 C6 20 10 14.5 13 14.5 C17 14.5 21 20 21 32Z" fill="#120c09"/></g></svg></td><td><span class="l">55668899</span></td><td><span class="l"></span></td><td><a class="l">0.00</a></td><td></td><td>未知</td><td><a class="l">2</a></td><td><a class="l">0</a></td><td><span class="bd b1">代理</span></td><td>离线</td><td>正常</td><td><span class="l">2020-10-14 19:52</span></td><td><span class="l">2020-10-14 19:50</span></td><td class="op"><span class="btn w1">发送消息</span><span class="btn w2">修改</span><span class="btn w2">删除</span></td></tr>
</tbody>
</table>
<svg id="handle" viewBox="0 0 9.5 38.2"><path d="M0 0 L9.5 5.5 L9.5 32.7 L0 38.2 Z" fill="#dcdcdc" fill-opacity="0.85"/><path d="M7 14.5 L2.5 19.2 L7 24 Z" fill="#aaa"/></svg>
</body>
</html>
